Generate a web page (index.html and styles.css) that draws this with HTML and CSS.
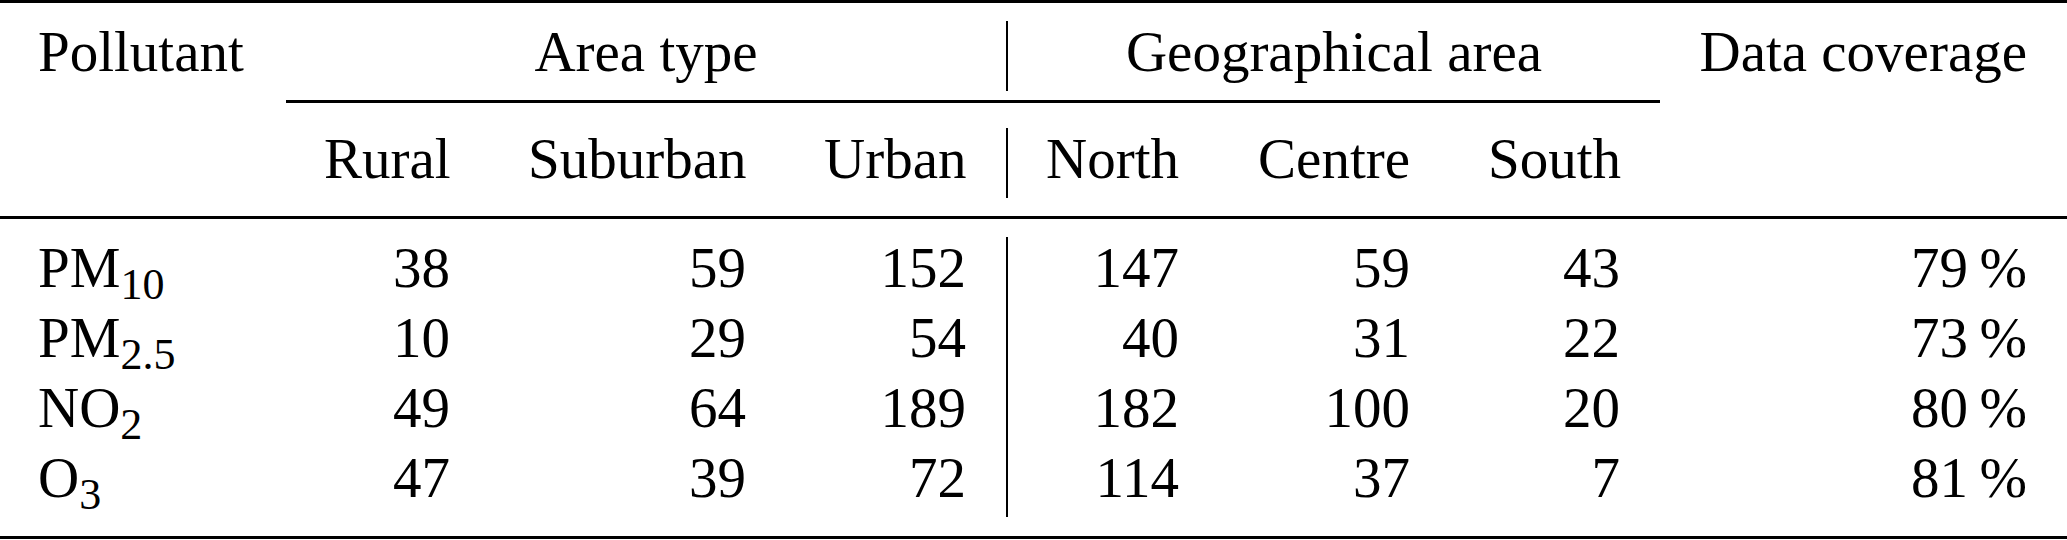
FILE: index.html
```html
<!DOCTYPE html>
<html lang="en">
<head>
<meta charset="UTF-8" />
<meta name="viewport" content="width=device-width, initial-scale=1" />
<title>Monitoring stations by pollutant</title>
<link rel="stylesheet" href="styles.css">
</head>
<body>

<div class="tbl">
  <div class="row head-top">
    <div class="cell name">Pollutant</div>
    <div class="cell group sep">Area type</div>
    <div class="cell group">Geographical area</div>
    <div class="cell num">Data coverage</div>
  </div>

  <div class="row cmid">
    <div class="cmid-line"></div>
  </div>

  <div class="row head-sub">
    <div class="cell"></div>
    <div class="cell num">Rural</div>
    <div class="cell num">Suburban</div>
    <div class="cell num sep">Urban</div>
    <div class="cell num">North</div>
    <div class="cell num">Centre</div>
    <div class="cell num">South</div>
    <div class="cell"></div>
  </div>

  <div class="midrule"></div>

  <div class="data">
    <div class="row">
      <div class="cell name">PM<span class="sub">10</span></div>
      <div class="cell num">38</div>
      <div class="cell num">59</div>
      <div class="cell num sep">152</div>
      <div class="cell num">147</div>
      <div class="cell num">59</div>
      <div class="cell num">43</div>
      <div class="cell num">79&thinsp;%</div>
    </div>
    <div class="row">
      <div class="cell name">PM<span class="sub">2.5</span></div>
      <div class="cell num">10</div>
      <div class="cell num">29</div>
      <div class="cell num sep">54</div>
      <div class="cell num">40</div>
      <div class="cell num">31</div>
      <div class="cell num">22</div>
      <div class="cell num">73&thinsp;%</div>
    </div>
    <div class="row">
      <div class="cell name">NO<span class="sub">2</span></div>
      <div class="cell num">49</div>
      <div class="cell num">64</div>
      <div class="cell num sep">189</div>
      <div class="cell num">182</div>
      <div class="cell num">100</div>
      <div class="cell num">20</div>
      <div class="cell num">80&thinsp;%</div>
    </div>
    <div class="row">
      <div class="cell name">O<span class="sub">3</span></div>
      <div class="cell num">47</div>
      <div class="cell num">39</div>
      <div class="cell num sep">72</div>
      <div class="cell num">114</div>
      <div class="cell num">37</div>
      <div class="cell num">7</div>
      <div class="cell num">81&thinsp;%</div>
    </div>
  </div>
</div>

</body>
</html>
```

FILE: styles.css
```css
body {
  margin: 0;
  font-family: "Liberation Serif", "Times New Roman", serif;
  font-size: 57px;
  color: #000;
  background: #fff;
}
.tbl {
  --cols: 286px 204px 296px 222px 211px 231px 210px 1fr;
  border-top: 3px solid #000;
  border-bottom: 3px solid #000;
}
.row {
  display: grid;
  grid-template-columns: var(--cols);
  height: 70px;
  line-height: 62px;
}
.head-top {
  margin-top: 18px;
}
.cmid {
  height: auto;
  margin-top: 9px;
}
.cmid-line {
  grid-column: 2 / 8;
  border-top: 3px solid #000;
}
.head-sub {
  margin-top: 25px;
}
.midrule {
  margin-top: 18px;
  border-top: 3px solid #000;
}
.data {
  margin-top: 18px;
  margin-bottom: 19px;
}
.cell {
  padding: 0 40px 0 38px;
  white-space: nowrap;
}
.num {
  text-align: right;
}
.group {
  grid-column: span 3;
  text-align: center;
  padding: 0;
}
.sep {
  border-right: 2px solid #000;
}
.sub {
  font-size: 44px;
  line-height: 0;
  vertical-align: -12px;
}
```
